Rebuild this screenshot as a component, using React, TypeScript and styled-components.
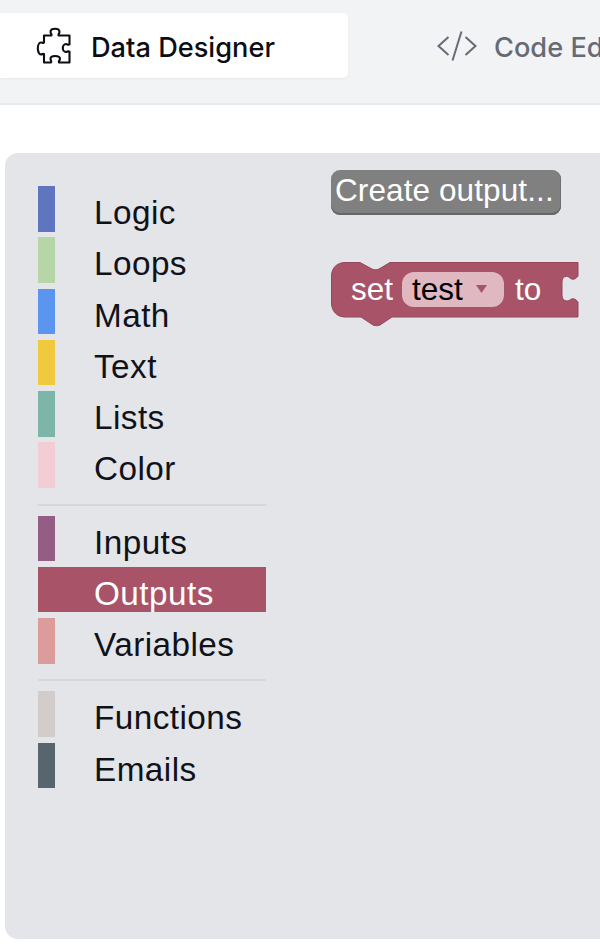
import React from "react";
import styled, { createGlobalStyle } from "styled-components";

const GlobalStyle = createGlobalStyle`
  html, body {
    margin: 0;
    padding: 0;
    background: #ffffff;
  }
`;

const Page = styled.div`
  width: 600px;
  height: 949px;
  overflow: hidden;
  background: #ffffff;
`;

const TabBar = styled.div`
  display: flex;
  align-items: center;
  height: 103px;
  background-color: #f2f3f5;
  border-bottom: 2px solid #e9eaed;
  font-family: "Inter", "Lato", sans-serif;
  white-space: nowrap;
  overflow: hidden;
`;

const Tab = styled.div<{ $active?: boolean }>`
  display: flex;
  align-items: center;
  flex-shrink: 0;
  gap: ${(props) => (props.$active ? "19px" : "17px")};
  height: 65px;
  margin-top: -12px;
  padding-left: ${(props) => (props.$active ? "36px" : "0")};
  width: ${(props) => (props.$active ? "312px" : "auto")};
  margin-left: ${(props) => (props.$active ? "0" : "89px")};
  border-radius: 0 5px 5px 0;
  background-color: ${(props) => (props.$active ? "#ffffff" : "transparent")};
  box-shadow: ${(props) => (props.$active ? "0 1px 3px rgba(0, 0, 0, 0.05)" : "none")};
  color: ${(props) => (props.$active ? "#0b0d12" : "#666a75")};
  font-size: 27.2px;
  font-weight: 500;
`;

const TabLabel = styled.span`
  padding-top: 4px;
`;

const Workspace = styled.div`
  padding: 48px 0 0 5px;
`;

const Panel = styled.div`
  display: flex;
  gap: 65px;
  height: 786px;
  margin-right: -20px;
  border-radius: 13px 0 0 13px;
  background-color: #e4e5e9;
  font-family: "Liberation Sans", Arial, sans-serif;
`;

const Toolbox = styled.div`
  display: flex;
  flex-direction: column;
  gap: 5.8px;
  width: 228px;
  margin-left: 33px;
  padding-top: 33px;
`;

const Category = styled.div<{ $selected?: boolean; $color: string }>`
  display: flex;
  height: 45.5px;
  background-color: ${(props) => (props.$selected ? props.$color : "transparent")};
  color: ${(props) => (props.$selected ? "#ffffff" : "#10121a")};
  font-size: 33.3px;
  letter-spacing: 0.45px;
  line-height: 54.6px;
`;

const Swatch = styled.div<{ $color: string }>`
  width: 17px;
  height: 100%;
  margin-right: 39px;
  background-color: ${(props) => props.$color};
`;

const Separator = styled.div`
  height: 2px;
  margin: 10px 0 4px;
  background-color: #d5d6da;
`;

const Flyout = styled.div`
  display: flex;
  flex-direction: column;
  align-items: flex-start;
  padding-top: 17px;
`;

const FlyoutButton = styled.div`
  box-sizing: border-box;
  width: 230px;
  height: 45px;
  padding-left: 4px;
  border-radius: 9px;
  background-color: #808080;
  box-shadow: inset 0 -2px 0 #666666, inset -1px 0 0 #707070;
  color: #ffffff;
  font-size: 31.5px;
  letter-spacing: 0.1px;
  line-height: 41px;
  white-space: nowrap;
`;

const BlockSvg = styled.svg`
  display: block;
  margin-top: 47px;
  font-size: 31.5px;
`;

const PuzzleIcon = () => (
  <svg width="36" height="38" viewBox="36 27 36 38" fill="none" stroke="#0b0d12" strokeWidth="2.1" strokeLinejoin="round">
    <path d="M44 35.5H51.5C52 34 50.5 33.5 50.5 32C50.5 30 52.5 28.8 55 28.8C57.5 28.8 59.5 30 59.5 32C59.5 33.5 58 34 58.5 35.5H69.5V44.5C68 45.5 67.5 44 66 44C64 44 62.8 46 62.8 48C62.8 50 64 52 66 52C67.5 52 68 50.5 69.5 51.5V62.5H59C58 61 60 60.5 60 59C60 57 57.5 56 55 56C52.5 56 50.5 57 50.5 59C50.5 60.5 52 61 51 62.5H44V54C43 53 42.5 54.5 41 54.5C39 54.5 37.8 51 37.8 48.5C37.8 45.5 39 42.5 41 42.5C42.5 42.5 43 43.5 44 42.5Z" />
  </svg>
);

const CodeIcon = () => (
  <svg width="40" height="30" viewBox="437 31 40 30" fill="none" stroke="#666a75" strokeWidth="2">
    <path d="M448.5 37L438.5 46L448.5 55" />
    <path d="M461.5 31.5L452.5 60.5" />
    <path d="M465.5 37L475.5 46L465.5 55" />
  </svg>
);

const SetBlock = () => (
  <BlockSvg width="248" height="65" viewBox="331 262 248 65">
    <path
      d="M345 262.5H360L372 269C374 270 377 270 379 269L390 262.5H578V276C575 280 572 280 570 278C567 275 562 276 562 282V295C562 301 567 302 570 300C572 298 575 298 578 302V317H392L380 325C378 326 375 326 373 325L361 317H345C337 317 331.5 311 331.5 303V276C331.5 268 337 262.5 345 262.5Z"
      fill="#a85368"
      stroke="#95465a"
      strokeWidth="1"
    />
    <text x="351" y="300" fill="#ffffff">set</text>
    <rect x="402" y="272" width="102" height="35" rx="12" fill="#dfb8c2" />
    <text x="412" y="300" fill="#000000">test</text>
    <path d="M476 285H487L481.5 293Z" fill="#a85368" />
    <text x="515" y="300" fill="#ffffff">to</text>
  </BlockSvg>
);

const groups = [
  [
    { name: "Logic", color: "#5f75bf" },
    { name: "Loops", color: "#b7d6a8" },
    { name: "Math", color: "#5c95f0" },
    { name: "Text", color: "#f1c93f" },
    { name: "Lists", color: "#7db5a9" },
    { name: "Color", color: "#f2cdd5" },
  ],
  [
    { name: "Inputs", color: "#945d84" },
    { name: "Outputs", color: "#a85368", selected: true },
    { name: "Variables", color: "#dc9c9c" },
  ],
  [
    { name: "Functions", color: "#d2cdca" },
    { name: "Emails", color: "#57656e" },
  ],
];

const App = () => {
  return (
    <Page>
      <GlobalStyle />
      <TabBar>
        <Tab $active>
          <PuzzleIcon />
          <TabLabel>Data Designer</TabLabel>
        </Tab>
        <Tab>
          <CodeIcon />
          <TabLabel>Code Editor</TabLabel>
        </Tab>
      </TabBar>
      <Workspace>
        <Panel>
          <Toolbox>
            {groups.map((group, index) => (
              <React.Fragment key={index}>
                {index > 0 && <Separator />}
                {group.map((item) => (
                  <Category key={item.name} $color={item.color} $selected={item.selected}>
                    <Swatch $color={item.color} />
                    {item.name}
                  </Category>
                ))}
              </React.Fragment>
            ))}
          </Toolbox>
          <Flyout>
            <FlyoutButton>Create output...</FlyoutButton>
            <SetBlock />
          </Flyout>
        </Panel>
      </Workspace>
    </Page>
  );
};

export default App;
